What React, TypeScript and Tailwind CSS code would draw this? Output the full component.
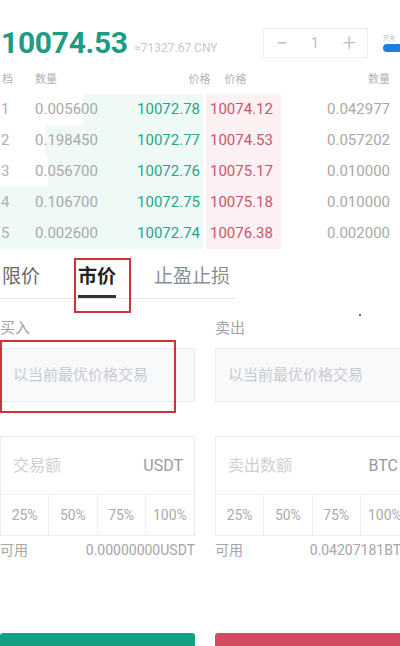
import React from "react";

const rows = [
  { i: "1", a: "0.005600", bp: "10072.78", sp: "10074.12", sa: "0.042977", g: 120, r: 75 },
  { i: "2", a: "0.198450", bp: "10072.77", sp: "10074.53", sa: "0.057202", g: 158, r: 75 },
  { i: "3", a: "0.056700", bp: "10072.76", sp: "10075.17", sa: "0.010000", g: 155, r: 75 },
  { i: "4", a: "0.106700", bp: "10072.75", sp: "10075.18", sa: "0.010000", g: 203, r: 75 },
  { i: "5", a: "0.002600", bp: "10072.74", sp: "10076.38", sa: "0.002000", g: 203, r: 75 },
];

const cjk = { fontFamily: 'Roboto, "Noto Sans CJK SC", sans-serif' };

function Column({ label, placeholder, field, unit, avail }: { label: string; placeholder: string; field: string; unit: string; avail: string }) {
  return (
    <div className="w-[195px] shrink-0 flex flex-col">
      <div className="pt-[19px] h-[20px] box-content text-[15px] leading-[20px] text-[#a3a3a3]">{label}</div>
      <div className="mt-[10px] h-[54px] border border-[#ececef] bg-[#f8f9fb] flex items-center pl-[12px] text-[15px] text-[#c9cacf]">
        {placeholder}
      </div>
      <div className="mt-[34px] h-[100px] border border-[#ededed] flex flex-col">
        <div className="h-[57px] flex items-center justify-between pl-[12px] pr-[11px]">
          <span className="text-[16px] text-[#cfcfd2]">{field}</span>
          <span className="text-[16px] text-[#9a9a9a]">{unit}</span>
        </div>
        <div className="flex-1 grid grid-cols-4 border-t border-[#f2f2f2] text-[14px] text-[#ababab]">
          <div className="flex items-center justify-center border-r border-[#f0f0f0]">25%</div>
          <div className="flex items-center justify-center border-r border-[#f0f0f0]">50%</div>
          <div className="flex items-center justify-center border-r border-[#f0f0f0]">75%</div>
          <div className="flex items-center justify-center">100%</div>
        </div>
      </div>
      <div className="mt-[4px] h-[20px] flex items-center justify-between text-[14px] text-[#a6a6a6]">
        <span>可用</span>
        <span>{avail}</span>
      </div>
    </div>
  );
}

export default function App() {
  return (
    <div className="w-[400px] h-[646px] overflow-hidden bg-white relative" style={cjk}>
      <div className="w-[412px]">
        {/* top */}
        <div className="h-[66px] pt-[20px] box-border flex items-center">
          <div className="w-[134px] shrink-0 pl-[1px] text-[30px] font-bold leading-[30px] text-[#1d9c83] tracking-[-0.3px]">10074.53</div>
          <div className="w-[129px] shrink-0 mt-[10px] text-[12px] text-[#c8c8c8]">≈71327.67 CNY</div>
          <div className="w-[105px] shrink-0 h-[30px] border border-[#efefef] flex items-center justify-between pl-[12px] pr-[11px] text-[#c0c0c0]">
            <span className="text-[20px] leading-none">−</span>
            <span className="text-[14px]">1</span>
            <span className="text-[24px] leading-none font-light">+</span>
          </div>
          <div className="ml-[15px] flex flex-col items-start gap-[3px]">
            <div className="text-[6px] leading-[7px] text-[#bbb]">开关</div>
            <div className="w-[22px] h-[8px] rounded-full bg-[#1c7fe6]"></div>
          </div>
        </div>
        {/* header */}
        <div className="h-[28px] flex items-center text-[11px] text-[#b3b3b3] pr-[22px]">
          <div className="w-[35px] pl-[2px]">档</div>
          <div className="flex-1">数量</div>
          <div className="w-[70px] text-right pr-[2px]">价格</div>
          <div className="w-[70px] pl-[12px]">价格</div>
          <div className="flex-1 text-right">数量</div>
        </div>
        {/* rows */}
        {rows.map((r) => (
          <div key={r.i} className="h-[31px] flex items-center text-[15px] relative">
            <div className="absolute top-0 bottom-0 bg-[#effaf7]" style={{ left: 203 - r.g, width: r.g }}></div>
            <div className="absolute top-0 bottom-0 left-[206px] bg-[#fdf0f3]" style={{ width: r.r }}></div>
            <div className="relative flex items-center w-full pr-[22px]">
              <div className="w-[35px] pl-[1px] text-[#b0b0b0]">{r.i}</div>
              <div className="w-[95px] text-[#a9a9a9]">{r.a}</div>
              <div className="w-[70px] text-right text-[#25a68c]">{r.bp}</div>
              <div className="w-[80px] pl-[10px] text-[#c9556f]">{r.sp}</div>
              <div className="flex-1 text-right text-[#a9a9a9]">{r.sa}</div>
            </div>
          </div>
        ))}
        {/* tabs */}
        <div className="h-[50px] w-[235px] border-b border-[#e6e6e6] flex items-start gap-[38px] pl-[2px] box-border">
          <div className="pt-[16px] text-[19px] leading-[24px] text-[#6b6b6b]">限价</div>
          <div className="pt-[16px] flex flex-col">
            <div className="text-[19px] leading-[24px] font-bold text-[#222]">市价</div>
            <div className="mt-[6px] h-[3px] bg-[#333]"></div>
          </div>
          <div className="pt-[16px] text-[19px] leading-[24px] text-[#8a8f96]">止盈止损</div>
        </div>
        {/* form */}
        <div className="flex gap-[20px]">
          <Column label="买入" placeholder="以当前最优价格交易" field="交易额" unit="USDT" avail="0.00000000USDT" />
          <Column label="卖出" placeholder="以当前最优价格交易" field="卖出数额" unit="BTC" avail="0.04207181BTC" />
        </div>
        {/* buttons */}
        <div className="mt-[73px] flex gap-[20px]">
          <div className="w-[195px] h-[40px] rounded-t-[3px] bg-[#13a182]"></div>
          <div className="w-[195px] h-[40px] rounded-t-[3px] bg-[#d24b5f]"></div>
        </div>
      </div>
      {/* annotation boxes */}
      <div className="absolute left-[74px] top-[258px] w-[57px] h-[55px] border-2 border-[#c8363b]"></div>
      <div className="absolute left-0 top-[340px] w-[176px] h-[73px] border-2 border-[#c8363b]"></div>
      <div className="absolute left-[359px] top-[314px] w-[2px] h-[2px] rounded-full bg-[#333]"></div>
    </div>
  );
}
